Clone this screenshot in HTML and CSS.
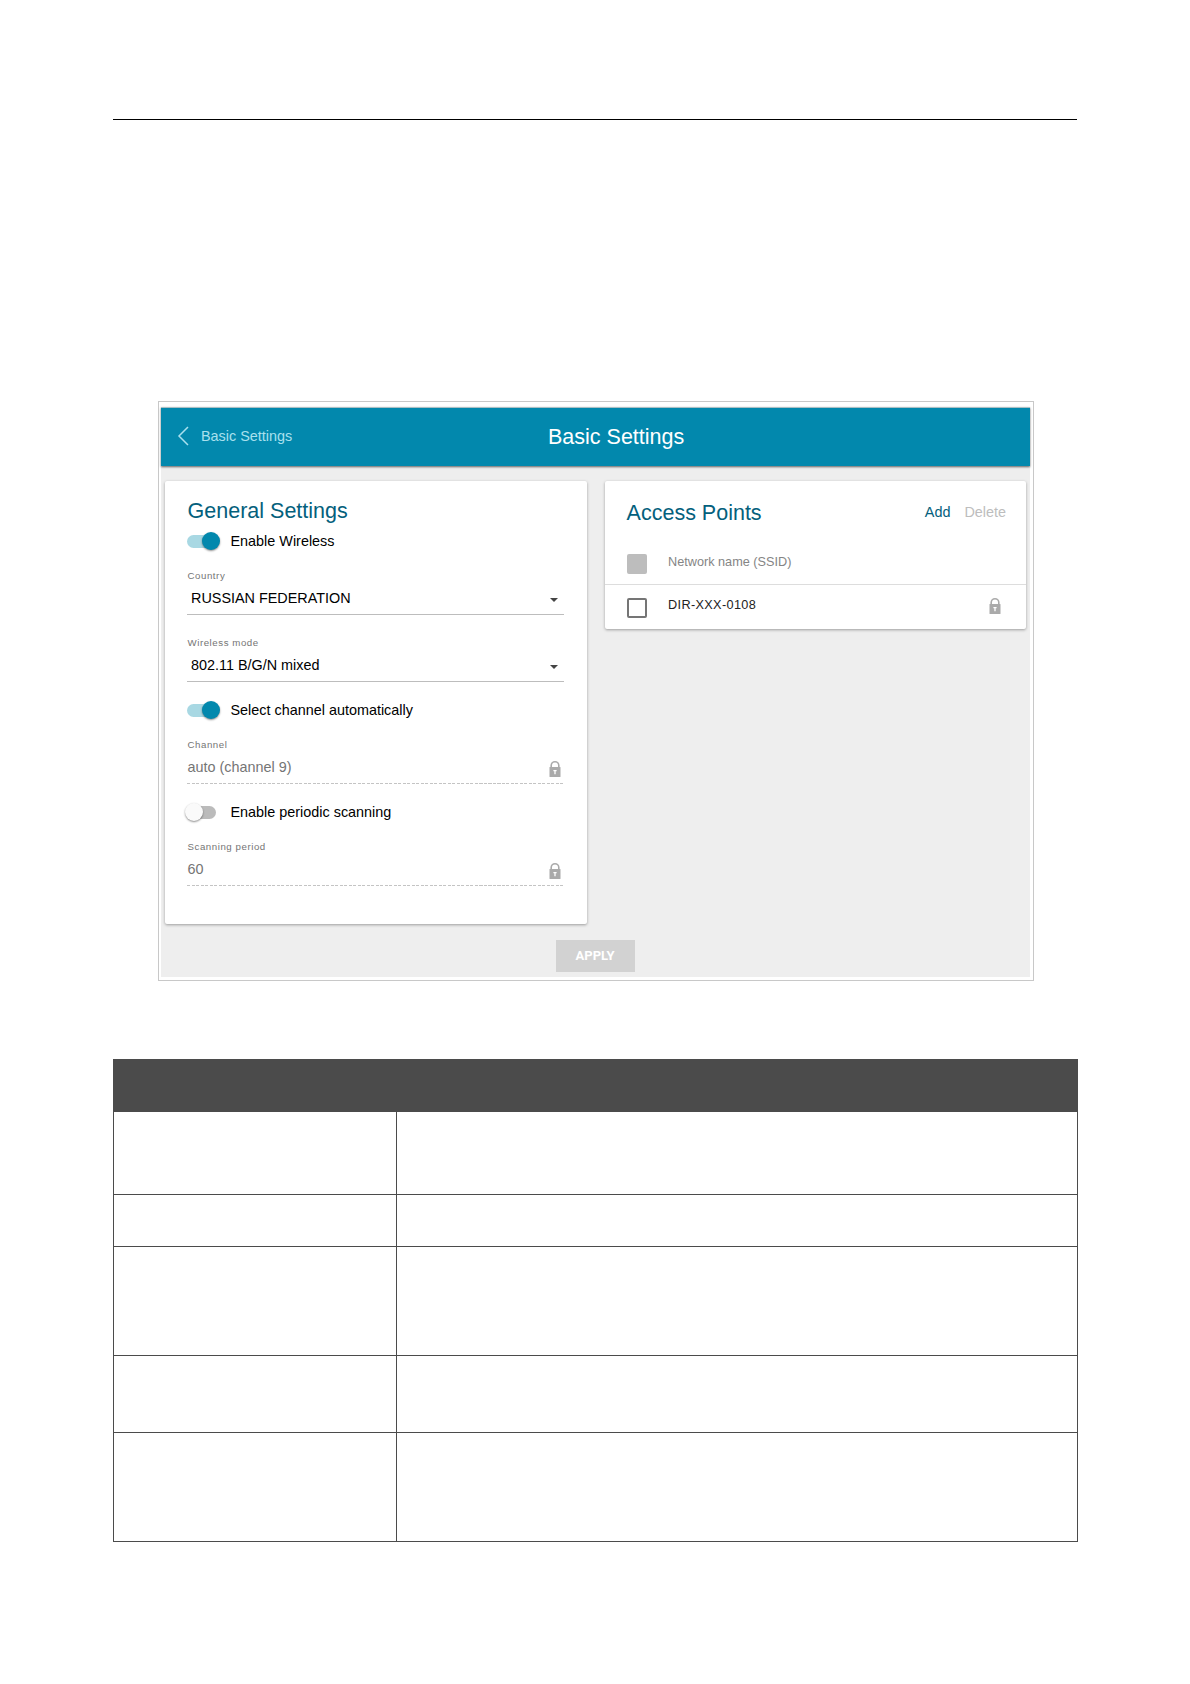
FILE: index.html
```html
<!DOCTYPE html>
<html lang="en">
<head>
    <meta charset="UTF-8">
    <meta name="viewport" content="width=device-width, initial-scale=1.0">
    <title>Basic Settings</title>
    <link rel="stylesheet" href="styles.css">
</head>
<body>
    <!-- Lock icon shared by the read-only fields -->
    <svg class="sprite" width="0" height="0">
        <symbol id="lock" viewBox="0 0 12 16">
            <path d="M2.2 7V4.6a3.8 3.8 0 0 1 7.6 0V7" fill="none" stroke="#aaa" stroke-width="1.6"/>
            <rect x="0.5" y="6" width="11" height="10" rx="0.6" fill="#aaa"/>
            <path d="M4.4 9.7h3.2M6 9.7v3.5" fill="none" stroke="#fff" stroke-width="1.3"/>
        </symbol>
    </svg>

    <div class="page">
        <hr class="page-rule">

        <div class="frame">
            <div class="screen">
                <header class="topbar">
                    <a class="back">
                        <svg width="12" height="20" viewBox="0 0 12 20"><path d="M11 1L2 10l9 9" fill="none" stroke="#a9e0ee" stroke-width="1.5"/></svg>
                        <span>Basic Settings</span>
                    </a>
                    <h1>Basic Settings</h1>
                </header>

                <main class="content">
                    <section class="card general">
                        <h2>General Settings</h2>
                        <div class="switch-row">
                            <span class="switch on"></span>
                            <span>Enable Wireless</span>
                        </div>
                        <div class="field select">
                            <label>Country</label>
                            <div class="value">RUSSIAN FEDERATION</div>
                        </div>
                        <div class="field select">
                            <label>Wireless mode</label>
                            <div class="value">802.11 B/G/N mixed</div>
                        </div>
                        <div class="switch-row">
                            <span class="switch on"></span>
                            <span>Select channel automatically</span>
                        </div>
                        <div class="field locked">
                            <label>Channel</label>
                            <div class="value">auto (channel 9) <svg class="lock"><use href="#lock"/></svg></div>
                        </div>
                        <div class="switch-row">
                            <span class="switch"></span>
                            <span>Enable periodic scanning</span>
                        </div>
                        <div class="field locked">
                            <label>Scanning period</label>
                            <div class="value">60 <svg class="lock"><use href="#lock"/></svg></div>
                        </div>
                    </section>

                    <section class="card access">
                        <div class="card-head">
                            <h2>Access Points</h2>
                            <a class="action">Add</a>
                            <a class="action disabled">Delete</a>
                        </div>
                        <div class="ap-row ap-title">
                            <span class="checkbox disabled"></span>
                            <span class="ssid">Network name (SSID)</span>
                        </div>
                        <div class="ap-row ap-item">
                            <span class="checkbox"></span>
                            <span class="ssid name">DIR-XXX-0108</span>
                            <svg class="lock"><use href="#lock"/></svg>
                        </div>
                    </section>
                </main>

                <button class="apply-btn" disabled>APPLY</button>
            </div>
        </div>

        <table class="params">
            <thead>
                <tr class="head"><th class="col-name"></th><th></th></tr>
            </thead>
            <tbody>
                <tr class="h83"><td></td><td></td></tr>
                <tr class="h52"><td></td><td></td></tr>
                <tr class="h109"><td></td><td></td></tr>
                <tr class="h77"><td></td><td></td></tr>
                <tr class="h109"><td></td><td></td></tr>
            </tbody>
        </table>
    </div>
</body>
</html>
```

FILE: styles.css
```css
* {
    margin: 0;
    padding: 0;
    box-sizing: border-box;
}

body {
    font-family: "Liberation Sans", Arial, sans-serif;
    font-size: 14.4px;
    line-height: 20px;
    background: #fff;
    color: #000;
}

.sprite {
    display: block;
}

.page {
    width: 965px;
    height: 1684px;
    margin-left: 113px;
    padding-top: 119px;
}

.page-rule {
    border: none;
    width: 964px;
    height: 1px;
    background: #000;
}

.frame {
    width: 876px;
    height: 580px;
    margin: 281px 0 0 45px;
    padding: 5px 3px 3px 2px;
    border: 1px solid #c8c8c8;
}

.screen {
    height: 570px;
    background: #eee;
}

/* top bar */

.topbar {
    display: flex;
    align-items: center;
    height: 59px;
    padding-bottom: 1px;
    background: #0288ad;
    border-top: 1px solid #a9bfc4;
    box-shadow: 0 1px 2px rgba(0, 0, 0, 0.6);
}

.back {
    display: flex;
    align-items: center;
    gap: 12px;
    width: 387px;
    padding: 0 0 2px 16px;
    color: #a9e0ee;
}

h1 {
    font-size: 21.5px;
    font-weight: normal;
    line-height: 26px;
    color: #fff;
}

/* cards */

.content {
    display: flex;
    align-items: flex-start;
    gap: 18px;
    padding: 15px 4px 0;
}

.card {
    background: #fff;
    border-radius: 2px;
    box-shadow: 0 1px 3px rgba(0, 0, 0, 0.35);
}

.general {
    width: 422px;
    height: 443px;
    padding: 17px 23px 0 22px;
}

.access {
    width: 421px;
    height: 148px;
}

h2 {
    font-size: 21.5px;
    font-weight: normal;
    line-height: 26px;
    text-indent: 0.6px;
    color: #04607c;
}

/* switches */

.switch-row {
    display: flex;
    align-items: center;
    gap: 13.5px;
    height: 20px;
    margin-top: 18px;
}

h2 + .switch-row {
    margin-top: 7px;
}

.switch {
    display: flex;
    align-items: center;
    width: 30px;
    height: 13px;
    border-radius: 7px;
}

.switch::before {
    content: "";
    flex: none;
    width: 18px;
    height: 18px;
    margin-left: -2px;
    border-radius: 50%;
    background: #fafafa;
    box-shadow: 0 1px 2px rgba(0, 0, 0, 0.45);
}

.switch:not(.on) {
    width: 29px;
    margin-right: 1px;
    background: #bbb;
}

.switch.on {
    background: #a8d8e3;
}

.switch.on::before {
    margin-left: 15px;
    background: #0288ad;
}

/* fields */

.field {
    height: 45px;
    margin-top: 19px;
    border-bottom: 1px solid #bdbdbd;
}

.field + .field {
    margin-top: 22px;
}

.field label {
    display: block;
    padding-left: 0.5px;
    font-size: 9.7px;
    line-height: 12px;
    letter-spacing: 0.55px;
    color: #757575;
}

.field .value {
    display: flex;
    align-items: center;
    justify-content: space-between;
    height: 20px;
    margin-top: 6px;
}

.select .value {
    padding: 0 6px 0 4px;
}

.select .value::after {
    content: "";
    margin-top: 3px;
    border: 4.5px solid transparent;
    border-top-color: #444;
    border-bottom: none;
}

.locked {
    border: none;
    background: repeating-linear-gradient(90deg, #c4c4c4 0 3px, #fff 3px 4.5px) bottom / 100% 1px no-repeat;
}

.locked .value {
    padding: 0 3px 0 0.5px;
    color: #757575;
}

.lock {
    width: 12px;
    height: 16px;
}

.locked .lock {
    margin-top: 3px;
}

/* access points */

.card-head {
    display: flex;
    align-items: flex-start;
    height: 63px;
    padding: 19px 20px 0 21px;
}

.action {
    margin: 2px 0 0 14px;
    color: #04607c;
}

.card-head h2 {
    margin-right: auto;
}

.action.disabled {
    color: #bdbdbd;
}

.ap-row {
    display: flex;
    align-items: flex-start;
    padding: 0 25px 0 22px;
}

.ap-title {
    height: 41px;
    padding-top: 10px;
    border-bottom: 1px solid #ddd;
}

.ap-item {
    height: 44px;
    padding-top: 13px;
}

.checkbox {
    width: 20px;
    height: 20px;
    margin-right: 21px;
    border: 2px solid #757575;
    border-radius: 2px;
}

.checkbox.disabled {
    background: #bdbdbd;
    border-color: #bdbdbd;
}

.ssid {
    flex: 1;
    font-size: 12.7px;
    line-height: 16px;
    color: #858585;
}

.ssid.name {
    margin-top: -1px;
    letter-spacing: 0.35px;
    color: #222;
}

/* apply */

.apply-btn {
    display: block;
    width: 79px;
    height: 32px;
    margin: 16px 0 0 395px;
    padding: 0 1px 1px 0;
    border: none;
    background: #d2d2d2;
    color: #fff;
    font: bold 13px Roboto, sans-serif;
}

/* parameters table */

.params {
    width: 965px;
    margin-top: 78px;
    border-collapse: collapse;
    table-layout: fixed;
}

.params td {
    border: 1px solid #4b4b4b;
}

.params th {
    background: #4b4b4b;
    border: 1px solid #4b4b4b;
}

.col-name {
    width: 283px;
}

.head {
    height: 52px;
}

.h52 {
    height: 52px;
}

.h77 {
    height: 77px;
}

.h83 {
    height: 83px;
}

.h109 {
    height: 109px;
}
```
